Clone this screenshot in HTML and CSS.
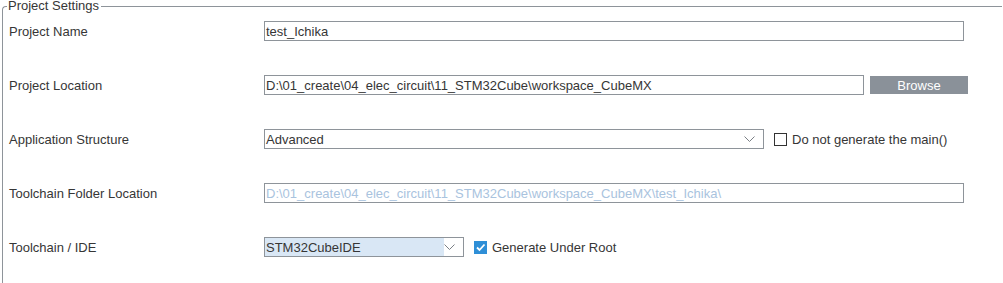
FILE: index.html
```html
<!DOCTYPE html>
<html>
<head>
<meta charset="utf-8">
<link rel="stylesheet" href="styles.css">
</head>
<body>
<fieldset class="settings">
  <legend class="legend">Project Settings</legend>
  <div class="rows">
    <div class="row">
      <div class="label">Project Name</div>
      <div class="field w700">test_Ichika</div>
    </div>
    <div class="row">
      <div class="label">Project Location</div>
      <div class="field w600">D:\01_create\04_elec_circuit\11_STM32Cube\workspace_CubeMX</div>
      <div class="browse">Browse</div>
    </div>
    <div class="row">
      <div class="label">Application Structure</div>
      <div class="select w500">
        <span class="select-text">Advanced</span>
        <svg class="chev" width="11" height="6" viewBox="0 0 11 6"><path d="M0.5 0.5 L5.5 5.5 L10.5 0.5" fill="none" stroke="#7a7f85" stroke-width="1"/></svg>
      </div>
      <div class="check">
        <span class="box"></span>
        <span class="check-label">Do not generate the main()</span>
      </div>
    </div>
    <div class="row">
      <div class="label">Toolchain Folder Location</div>
      <div class="field w700 disabled">D:\01_create\04_elec_circuit\11_STM32Cube\workspace_CubeMX\test_Ichika\</div>
    </div>
    <div class="row">
      <div class="label">Toolchain / IDE</div>
      <div class="select w200">
        <span class="select-text hl">STM32CubeIDE</span>
        <svg class="chev" width="11" height="6" viewBox="0 0 11 6"><path d="M0.5 0.5 L5.5 5.5 L10.5 0.5" fill="none" stroke="#7a7f85" stroke-width="1"/></svg>
      </div>
      <div class="check">
        <span class="box checked"><svg width="11" height="11" viewBox="0 0 11 11"><path d="M2 5.5 L4.5 8 L9.5 2.5" fill="none" stroke="#fff" stroke-width="1.8"/></svg></span>
        <span class="check-label">Generate Under Root</span>
      </div>
    </div>
  </div>
</fieldset>
</body>
</html>
```

FILE: styles.css
```css
html, body {
  margin: 0;
  padding: 0;
  background: #ffffff;
  font-family: "Liberation Sans", Arial, sans-serif;
  font-size: 13px;
  color: #363636;
  overflow: hidden;
}

.settings {
  margin: 0 0 0 2px;
  padding: 0 0 27px 6px;
  border: 1px solid #8e949a;
  border-right: none;
  border-bottom: none;
  border-top-left-radius: 4px;
  width: 1000px;
  box-sizing: border-box;
}

.legend {
  padding: 0 2px 0 1px;
  margin-left: -2px;
  line-height: 12px;
  color: #363636;
}

.rows {
  display: flex;
  flex-direction: column;
  gap: 34px;
  padding-top: 9px;
}

.row {
  display: flex;
  align-items: center;
  height: 20px;
}

.label {
  width: 255px;
  flex: none;
  padding-top: 1px;
}

.field {
  height: 20px;
  box-sizing: border-box;
  border: 1px solid #8e949a;
  padding: 1px 0 0 1px;
  line-height: 17px;
  white-space: nowrap;
  overflow: hidden;
  flex: none;
}

.w700 { width: 700px; }
.w600 { width: 600px; }
.w500 { width: 500px; }
.w200 { width: 200px; }

.disabled {
  color: #a9c3de;
}

.browse {
  margin-left: 6px;
  width: 98px;
  height: 18px;
  box-sizing: border-box;
  padding-top: 1px;
  background: #8a9199;
  color: #ffffff;
  text-align: center;
  line-height: 17px;
  flex: none;
}

.select {
  height: 20px;
  box-sizing: border-box;
  border: 1px solid #8e949a;
  display: flex;
  align-items: stretch;
  flex: none;
  position: relative;
}

.select-text {
  flex: 1;
  padding: 1px 0 0 1px;
  line-height: 17px;
  margin-right: 19px;
}

.select-text.hl {
  background: #d9e7f5;
}

.chev {
  position: absolute;
  right: 8px;
  top: 6px;
}

.check {
  display: flex;
  align-items: center;
  margin-left: 10px;
}

.box {
  width: 13px;
  height: 13px;
  box-sizing: border-box;
  border: 1px solid #333333;
  background: #ffffff;
  display: flex;
  align-items: center;
  justify-content: center;
  margin-right: 5px;
}

.box.checked {
  border: none;
  background: #2f8fd7;
}

.check-label {
  color: #363636;
}
```
